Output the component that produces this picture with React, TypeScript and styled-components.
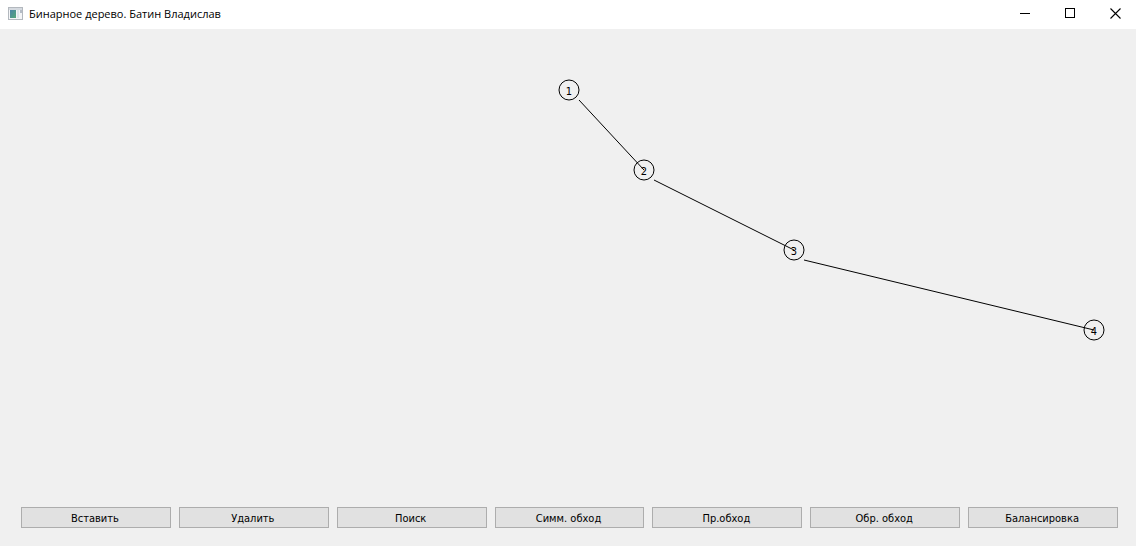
import React from "react";
import styled, { createGlobalStyle } from "styled-components";

const GlobalStyle = createGlobalStyle`
  * { box-sizing: border-box; }
  body { margin: 0; background: #f0f0f0; }
`;

const Window = styled.div`
  display: flex;
  flex-direction: column;
  min-height: 100vh;
  background: #f0f0f0;
  color: #000;
`;

const TitleBar = styled.header`
  display: flex;
  align-items: center;
  height: 29px;
  padding: 0 0 2px 8px;
  background: #fff;
`;

const AppIcon = styled.svg`
  flex: none;
  margin-right: 6px;
`;

const Title = styled.h1`
  flex: 1;
  margin: 0;
  font: 400 11px/16px "Open Sans", sans-serif;
  white-space: nowrap;
`;

const WindowControl = styled.button`
  display: flex;
  align-items: center;
  justify-content: center;
  width: 45px;
  height: 27px;
  padding: 0 0 0 4px;
  border: 0;
  background: transparent;
  &:hover { background: #e5e5e5; }
`;

const Canvas = styled.main`
  flex: 1;
`;

const TreeDrawing = styled.svg`
  display: block;
  width: 100%;
  height: auto;
`;

const NodeCircle = styled.circle`
  fill: none;
  stroke: #000;
`;

const Edge = styled.line`
  stroke: #000;
`;

const NodeLabel = styled.text`
  font: 11px "DejaVu Sans Condensed", "DejaVu Sans", sans-serif;
  text-anchor: middle;
`;

const Toolbar = styled.footer`
  display: flex;
  gap: 8px;
  padding: 0 18px 18px 21px;
`;

const ActionButton = styled.button`
  flex: 1 1 0;
  min-width: 0;
  height: 21px;
  padding: 2px 2px 0 0;
  border: 1px solid #adadad;
  background: #e1e1e1;
  color: #000;
  font: 11px/17px "DejaVu Sans Condensed", "DejaVu Sans", sans-serif;
  white-space: nowrap;
  &:hover { border-color: #0078d7; background: #e5f1fb; }
`;

const RADIUS = 10;

const nodes = [
  { value: 1, x: 569, y: 61 },
  { value: 2, x: 644, y: 141 },
  { value: 3, x: 794, y: 221 },
  { value: 4, x: 1094, y: 301 },
];

const actions = [
  "Вставить",
  "Удалить",
  "Поиск",
  "Симм. обход",
  "Пр.обход",
  "Обр. обход",
  "Балансировка",
];

export default function App() {
  return (
    <Window>
      <GlobalStyle />
      <TitleBar>
        <AppIcon width="15" height="14" viewBox="0 0 15 14" aria-hidden="true">
          <defs>
            <linearGradient id="pane" x1="0" y1="0" x2="1" y2="1">
              <stop offset="0" stopColor="#4c84a8" />
              <stop offset="1" stopColor="#55a878" />
            </linearGradient>
          </defs>
          <rect x="0.5" y="0.5" width="14" height="12" fill="#f4f5f7" stroke="#b3b8be" />
          <rect x="1" y="1" width="13" height="2" fill="#d5dae0" />
          <rect x="2" y="3" width="6" height="8" fill="url(#pane)" />
          <rect x="9" y="3" width="2" height="8" fill="#dfe4ea" />
          <rect x="12" y="3" width="2" height="3" fill="#b5bcc6" />
        </AppIcon>
        <Title>Бинарное дерево. Батин Владислав</Title>
        <WindowControl aria-label="Свернуть">
          <svg width="11" height="11" viewBox="0 0 11 11">
            <path d="M0 5.5H10" stroke="#000" />
          </svg>
        </WindowControl>
        <WindowControl aria-label="Развернуть">
          <svg width="11" height="11" viewBox="0 0 11 11">
            <rect x="0.5" y="0.5" width="9" height="9" fill="none" stroke="#000" />
          </svg>
        </WindowControl>
        <WindowControl aria-label="Закрыть">
          <svg width="11" height="11" viewBox="0 0 11 11">
            <path d="M0.5 0.5L10.5 10.5M10.5 0.5L0.5 10.5" stroke="#000" strokeWidth="1.1" />
          </svg>
        </WindowControl>
      </TitleBar>
      <Canvas>
        <TreeDrawing viewBox="0 0 1136 470" role="img" aria-label="Бинарное дерево">
          {nodes.slice(1).map((node, i) => (
            <Edge
              key={node.value}
              x1={nodes[i].x + RADIUS}
              y1={nodes[i].y + RADIUS}
              x2={node.x}
              y2={node.y}
            />
          ))}
          {nodes.map((node) => (
            <React.Fragment key={node.value}>
              <NodeCircle cx={node.x} cy={node.y} r={RADIUS} />
              <NodeLabel x={node.x} y={node.y + 5}>
                {node.value}
              </NodeLabel>
            </React.Fragment>
          ))}
        </TreeDrawing>
      </Canvas>
      <Toolbar>
        {actions.map((label) => (
          <ActionButton key={label} type="button">
            {label}
          </ActionButton>
        ))}
      </Toolbar>
    </Window>
  );
}
